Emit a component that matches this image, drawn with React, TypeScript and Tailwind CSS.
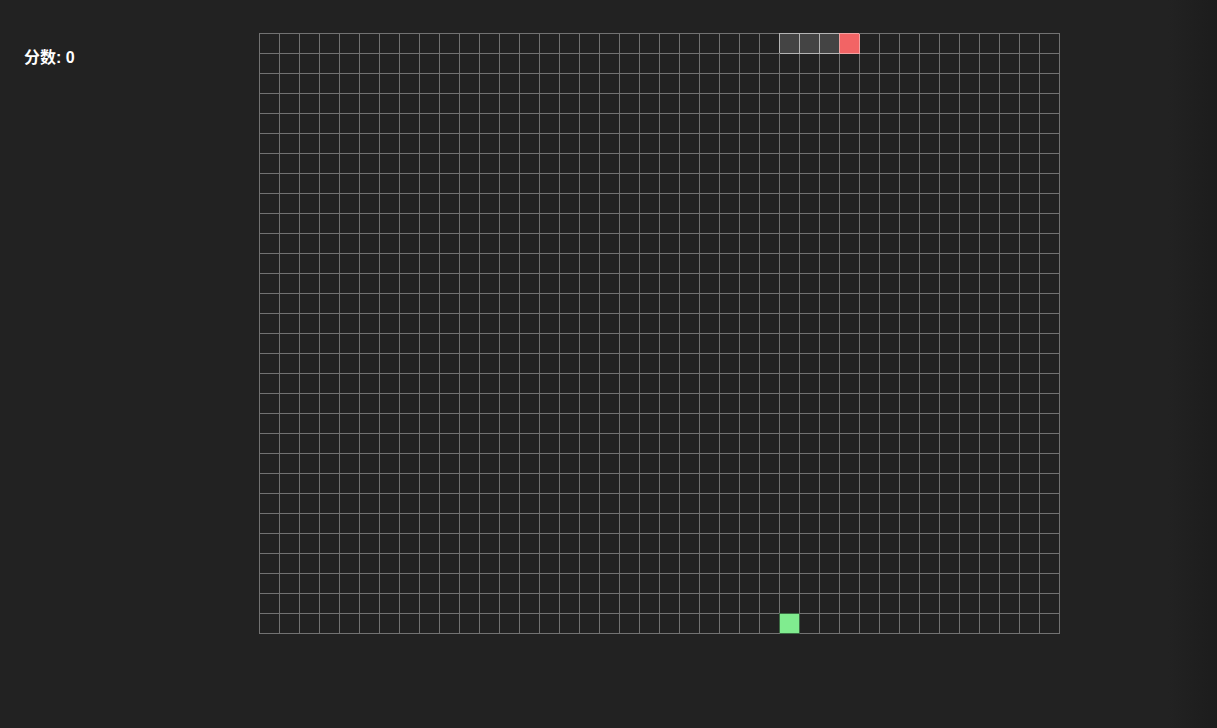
import React from 'react';

const COLS = 40;
const ROWS = 30;

const snake = [
  { x: 26, y: 0 },
  { x: 27, y: 0 },
  { x: 28, y: 0 },
  { x: 29, y: 0 }, // head
];
const food = { x: 26, y: 29 };

function Cell({ x, y }: { x: number; y: number }) {
  const idx = snake.findIndex((s) => s.x === x && s.y === y);
  const isHead = idx === snake.length - 1;
  const isFood = food.x === x && food.y === y;

  let cls = 'w-5 h-5 border-r border-b border-[#727272] bg-[#222]';
  if (isHead) {
    cls = 'w-5 h-5 border-r border-b border-[#f3a3a3] bg-[#f26465] shadow-[-1px_-1px_0_0_#f3a3a3]';
  } else if (idx >= 0) {
    cls = 'w-5 h-5 border-r border-b border-[#b5b5b5] bg-[#444] shadow-[-1px_-1px_0_0_#b5b5b5]';
  } else if (isFood) {
    cls = 'w-5 h-5 border-r border-b border-[#3c6b44] bg-[#80ec8f] shadow-[-1px_-1px_0_0_#3c6b44]';
  }
  return <div className={cls} />;
}

export default function App() {
  const cells = [];
  for (let y = 0; y < ROWS; y++) {
    for (let x = 0; x < COLS; x++) {
      cells.push(<Cell key={`${x}-${y}`} x={x} y={y} />);
    }
  }

  return (
    <div className="w-[1217px] h-[728px] flex pt-[33px] bg-[linear-gradient(to_right,#222222_96%,#1c1c1c)] font-['Liberation_Sans','Noto_Sans_CJK_SC',sans-serif] text-white">
      <div className="w-[259px] pl-6 pt-[13px]">
        <div className="text-base leading-6 font-bold">分数: 0</div>
      </div>
      <div className="self-start grid grid-cols-[repeat(40,20px)] border-l border-t border-[#727272]">
        {cells}
      </div>
    </div>
  );
}
